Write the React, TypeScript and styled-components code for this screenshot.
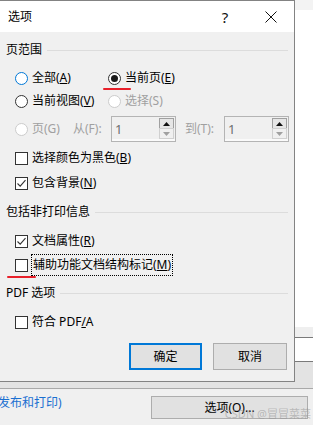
import styled, { createGlobalStyle } from "styled-components";

const GlobalStyle = createGlobalStyle`
  html, body {
    margin: 0;
    padding: 0;
  }
  body {
    width: 313px;
    height: 425px;
    overflow: hidden;
    background: #ffffff;
    font-family: "Noto Sans", "Noto Sans CJK SC", sans-serif;
    font-size: 12px;
    color: #000;
  }
`;

const Screen = styled.div`
  position: relative;
  width: 313px;
  height: 425px;
  overflow: hidden;
  display: flex;
  flex-direction: column;
`;

/* ---------- the application window behind the dialog ---------- */

const TopStrip = styled.div`
  flex: none;
  height: 10px;
  background: #f3f3f3;
`;

const Sheet = styled.div`
  flex: none;
  height: 317px;
  background: #ffffff;
`;

const Ribbon = styled.div`
  flex: none;
  height: 10px;
  background: #efefef;
  border-bottom: 1px solid #7a7a7a;
`;

const Field = styled.div`
  flex: none;
  height: 23px;
  background: #ffffff;
  border-bottom: 1px solid #7a7a7a;
`;

const Shelf = styled.div`
  flex: none;
  height: 26px;
  background: #e3e3e3;
  border-bottom: 1px solid #a9a9a9;
`;

const Footer = styled.div`
  flex: 1;
  position: relative;
  display: flex;
  align-items: flex-start;
  background: #f0f0f0;
`;

const FooterLink = styled.span`
  margin: 6px 0 0 -2px;
  line-height: 16px;
  color: #1a6fd1;
  white-space: nowrap;
`;

const FooterButton = styled.div`
  margin: 7px 5px 0 auto;
  width: 157px;
  height: 23px;
  box-sizing: border-box;
  border: 1px solid #adadad;
  background: #e1e1e1;
  display: flex;
  align-items: center;
  justify-content: center;
  line-height: 16px;
`;

const Watermark = styled.span`
  position: absolute;
  right: 2px;
  bottom: 5px;
  font-size: 11px;
  line-height: 13px;
  color: rgba(150, 150, 150, 0.55);
  white-space: nowrap;
`;

/* ---------- dialog window ---------- */

const Dialog = styled.div`
  position: absolute;
  top: 0;
  left: -1px;
  width: 296px;
  height: 382px;
  box-sizing: border-box;
  border: 1px solid #838383;
  background: #f0f0f0;
  display: flex;
  flex-direction: column;
`;

const TitleBar = styled.div`
  flex: none;
  height: 31px;
  background: #ffffff;
  display: flex;
  align-items: center;
`;

const Title = styled.span`
  padding-left: 8px;
  flex: 1;
  font-size: 12px;
  line-height: 16px;
`;

const CaptionButton = styled.div`
  width: 46px;
  height: 31px;
  display: flex;
  align-items: center;
  justify-content: center;
  font-size: 15px;
  color: #111;
`;

const Body = styled.div`
  flex: 1;
  position: relative;
  padding: 10px 6px 0 6px;
  display: flex;
  flex-direction: column;
`;

const Heading = styled.div<{ $top: number }>`
  margin-top: ${(p) => p.$top}px;
  height: 16px;
  display: flex;
  align-items: center;
  line-height: 16px;
  white-space: nowrap;

  &::after {
    content: "";
    flex: 1;
    height: 1px;
    margin-left: 5px;
    background: #dcdcdc;
  }
`;

const Row = styled.div<{ $top: number; $h: number }>`
  margin-top: ${(p) => p.$top}px;
  height: ${(p) => p.$h}px;
  padding-left: 9px;
  display: flex;
  align-items: center;
  white-space: nowrap;
`;

const Option = styled.div<{ $w?: number; $disabled?: boolean }>`
  position: relative;
  display: flex;
  align-items: center;
  gap: 4px;
  width: ${(p) => (p.$w ? `${p.$w}px` : "auto")};
  flex: none;
  line-height: 16px;
  color: ${(p) => (p.$disabled ? "#a0a0a0" : "#000")};
`;

const Radio = styled.span<{ $state: "normal" | "hover" | "checked" | "disabled" }>`
  width: 13px;
  height: 13px;
  box-sizing: border-box;
  border-radius: 50%;
  flex: none;
  display: flex;
  align-items: center;
  justify-content: center;
  background: #ffffff;
  border: 1px solid
    ${(p) => (p.$state === "hover" ? "#0078d7" : p.$state === "disabled" ? "#cccccc" : "#333333")};

  &::after {
    content: "";
    display: ${(p) => (p.$state === "checked" ? "block" : "none")};
    width: 7px;
    height: 7px;
    border-radius: 50%;
    background: #1a1a1a;
  }
`;

const Box = styled.span`
  width: 13px;
  height: 13px;
  box-sizing: border-box;
  border: 1px solid #333333;
  background: #ffffff;
  flex: none;
  display: flex;
  align-items: center;
  justify-content: center;
`;

const Key = styled.span`
  text-decoration: underline;
  text-underline-offset: 1px;
`;

const Focus = styled.span`
  outline: 1px dotted #000;
  outline-offset: 0;
  padding: 2px 1px;
`;

const FieldLabel = styled.span<{ $w: number; $left?: number }>`
  width: ${(p) => p.$w}px;
  margin-left: ${(p) => p.$left ?? 0}px;
  flex: none;
  color: #a0a0a0;
  line-height: 16px;
`;

const SpinBox = styled.div`
  width: 65px;
  height: 26px;
  box-sizing: border-box;
  border: 1px solid #b4b4b4;
  background: #f0f0f0;
  box-shadow: inset 0 -2px 0 #fafafa;
  flex: none;
  display: flex;
  align-items: center;
  padding: 0 1px 0 3px;
`;

const SpinValue = styled.span`
  flex: 1;
  font-size: 13px;
  line-height: 16px;
  color: #6d6d6d;
`;

const SpinArrows = styled.div`
  display: flex;
  flex-direction: column;
  align-self: stretch;
  padding: 1px 0;
`;

const SpinArrow = styled.div<{ $active: boolean }>`
  width: 15px;
  height: 11px;
  box-sizing: border-box;
  border: 1px solid ${(p) => (p.$active ? "#a0a0a0" : "#d0d0d0")};
  background: ${(p) => (p.$active ? "#e6e6e6" : "#f0f0f0")};
  display: flex;
  align-items: center;
  justify-content: center;

  & + & {
    margin-top: -1px;
  }
`;

const Buttons = styled.div`
  margin-top: 9px;
  padding-right: 1px;
  display: flex;
  justify-content: flex-end;
  gap: 11px;
`;

const DialogButton = styled.div<{ $primary?: boolean; $w: number }>`
  width: ${(p) => p.$w}px;
  height: 27px;
  box-sizing: border-box;
  border: ${(p) => (p.$primary ? "2px solid #0078d7" : "1px solid #adadad")};
  background: #e1e1e1;
  display: flex;
  align-items: center;
  justify-content: center;
  line-height: 16px;
`;

const RedMark = styled.span<{ $x: number; $y: number; $w: number }>`
  position: absolute;
  left: ${(p) => p.$x}px;
  top: ${(p) => p.$y}px;
  width: ${(p) => p.$w}px;
  height: 2px;
  border-radius: 1px;
  background: #e8202a;
`;

function Check() {
  return (
    <svg width="11" height="11" viewBox="0 0 11 11">
      <polyline points="1.5,5.5 4.2,8.2 9.5,2.2" fill="none" stroke="#333" strokeWidth="1.1" />
    </svg>
  );
}

function CloseGlyph() {
  return (
    <svg width="12" height="12" viewBox="0 0 12 12">
      <path d="M0.5 0.5 L11.5 11.5 M11.5 0.5 L0.5 11.5" stroke="#111" strokeWidth="1" />
    </svg>
  );
}

function Arrow({ up }: { up: boolean }) {
  return (
    <svg width="7" height="4" viewBox="0 0 7 4">
      <polygon points={up ? "0,4 7,4 3.5,0" : "0,0 7,0 3.5,4"} fill={up ? "#111" : "#a0a0a0"} />
    </svg>
  );
}

function Spinner() {
  return (
    <SpinBox>
      <SpinValue>1</SpinValue>
      <SpinArrows>
        <SpinArrow $active>
          <Arrow up />
        </SpinArrow>
        <SpinArrow $active={false}>
          <Arrow up={false} />
        </SpinArrow>
      </SpinArrows>
    </SpinBox>
  );
}

export default function App() {
  return (
    <Screen>
      <GlobalStyle />
      <TopStrip />
      <Sheet />
      <Ribbon />
      <Field />
      <Shelf />
      <Footer>
        <FooterLink>发布和打印)</FooterLink>
        <FooterButton>选项(O)...</FooterButton>
        <Watermark>CSDN @冒冒菜菜</Watermark>
      </Footer>

      <Dialog>
        <TitleBar>
          <Title>选项</Title>
          <CaptionButton>?</CaptionButton>
          <CaptionButton>
            <CloseGlyph />
          </CaptionButton>
        </TitleBar>

        <Body>
          <Heading $top={0}>页范围</Heading>
          <Row $top={9} $h={22}>
            <Option $w={93}>
              <Radio $state="hover" />
              <span>
                全部(<Key>A</Key>)
              </span>
            </Option>
            <Option>
              <Radio $state="checked" />
              <span>
                当前页(<Key>E</Key>)
              </span>
            </Option>
          </Row>
          <Row $top={1} $h={22}>
            <Option $w={93}>
              <Radio $state="normal" />
              <span>
                当前视图(<Key>V</Key>)
              </span>
            </Option>
            <Option $disabled>
              <Radio $state="disabled" />
              <span>选择(S)</span>
            </Option>
          </Row>
          <Row $top={4} $h={26}>
            <Option $w={58} $disabled>
              <Radio $state="disabled" />
              <span>页(G)</span>
            </Option>
            <FieldLabel $w={38}>从(F):</FieldLabel>
            <Spinner />
            <FieldLabel $w={39} $left={9}>
              到(T):
            </FieldLabel>
            <Spinner />
          </Row>
          <Row $top={4} $h={24}>
            <Option>
              <Box />
              <span>
                选择颜色为黑色(<Key>B</Key>)
              </span>
            </Option>
          </Row>
          <Row $top={1} $h={24}>
            <Option>
              <Box>
                <Check />
              </Box>
              <span>
                包含背景(<Key>N</Key>)
              </span>
            </Option>
          </Row>

          <Heading $top={9}>包括非打印信息</Heading>
          <Row $top={9} $h={24}>
            <Option>
              <Box>
                <Check />
              </Box>
              <span>
                文档属性(<Key>R</Key>)
              </span>
            </Option>
          </Row>
          <Row $top={0} $h={24}>
            <Option>
              <Box />
              <Focus>
                辅助功能文档结构标记(<Key>M</Key>)
              </Focus>
            </Option>
          </Row>

          <Heading $top={8}>PDF 选项</Heading>
          <Row $top={9} $h={24}>
            <Option>
              <Box />
              <span>
                符合 PDF<Key>/</Key>A
              </span>
            </Option>
          </Row>

          <Buttons>
            <DialogButton $primary $w={73}>
              确定
            </DialogButton>
            <DialogButton $w={74}>取消</DialogButton>
          </Buttons>

          <RedMark $x={103} $y={56} $w={28} />
          <RedMark $x={7} $y={244} $w={29} />
        </Body>
      </Dialog>
    </Screen>
  );
}
